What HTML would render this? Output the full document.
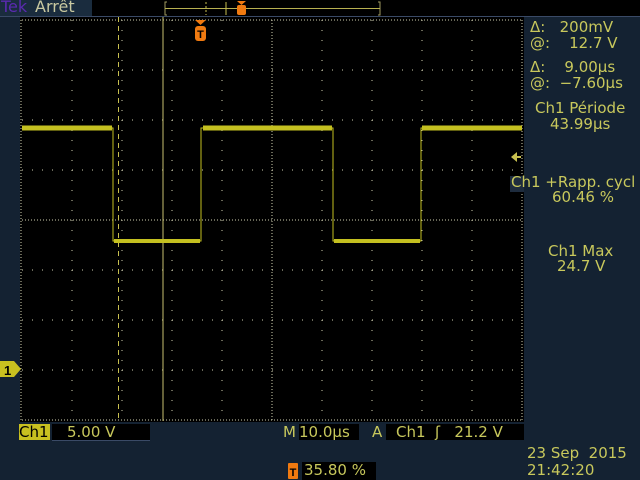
<!DOCTYPE html>
<html><head><meta charset="utf-8"><style>
body{margin:0;width:640px;height:480px;background:#142232;overflow:hidden;position:relative;font-family:"DejaVu Sans","Liberation Sans",sans-serif;color:#c8c85c}
.t{position:absolute;white-space:nowrap;font-size:15px;line-height:15px}
</style></head><body>
<svg width="640" height="480" style="position:absolute;left:0;top:0">
<rect x="0" y="0" width="92" height="16" fill="#1a2c3e"/>
<rect x="92" y="0" width="548" height="16" fill="#000"/>
<line x1="0" y1="16.5" x2="640" y2="16.5" stroke="#3a4a66"/>
<rect x="20" y="17" width="504" height="405" fill="#000"/>
<path d="M167 2h-2v13h2M378 2h2v13h-2" stroke="#a09a60" fill="none"/>
<line x1="165" y1="8.5" x2="380" y2="8.5" stroke="#b8b050"/>
<line x1="206" y1="2" x2="206" y2="15" stroke="#c8c050" stroke-dasharray="2 2"/>
<line x1="226" y1="2" x2="226" y2="15" stroke="#c8c050"/>
<path d="M237 1h9l-4.5 4z" fill="#f07a10"/><rect x="237" y="5" width="9" height="10" rx="2" fill="#f07a10"/>
<g stroke="#d0d0b0" stroke-width="1" stroke-dasharray="1 9">
<line x1="22" y1="70" x2="522" y2="70"/><line x1="22" y1="120" x2="522" y2="120"/><line x1="22" y1="170" x2="522" y2="170"/><line x1="22" y1="270" x2="522" y2="270"/><line x1="22" y1="320" x2="522" y2="320"/><line x1="22" y1="370" x2="522" y2="370"/>
<line x1="72" y1="20" x2="72" y2="420"/><line x1="122" y1="20" x2="122" y2="420"/><line x1="172" y1="20" x2="172" y2="420"/><line x1="222" y1="20" x2="222" y2="420"/><line x1="322" y1="20" x2="322" y2="420"/><line x1="372" y1="20" x2="372" y2="420"/><line x1="422" y1="20" x2="422" y2="420"/><line x1="472" y1="20" x2="472" y2="420"/>
</g>
<g stroke="#d0d0b0" stroke-dasharray="1 2">
<line x1="22" y1="220" x2="522" y2="220"/><line x1="272" y1="20" x2="272" y2="420"/>
<line x1="22" y1="20" x2="522" y2="20"/><line x1="22" y1="420" x2="522" y2="420"/>
<line x1="21" y1="20" x2="21" y2="420"/><line x1="522" y1="20" x2="522" y2="420"/>
</g>
<line x1="118.5" y1="17" x2="118.5" y2="421" stroke="#c8c050" stroke-dasharray="5 4"/>
<line x1="163" y1="17" x2="163" y2="421" stroke="#c8c070"/>
<g stroke="#c4c020" fill="none">
<path d="M22 128H113V241H201V128H333V241H421V128H522" stroke-width="1"/>
<path d="M22 128H112M203 128H332M422 128H522" stroke-width="5"/>
<path d="M114 241H200M334 241H420" stroke-width="4"/>
</g>
<path d="M195 20h11l-5.5 5z" fill="#f07a10"/>
<rect x="195" y="26" width="11" height="15" rx="3" fill="#f07a10"/>
<text x="200.5" y="38" font-size="11" font-weight="bold" text-anchor="middle" fill="#000" font-family="Liberation Sans">T</text>
<path d="M0 361h14l7 8l-7 8H0z" fill="#c8c020"/>
<text x="4" y="375" font-size="13" font-weight="bold" fill="#000" font-family="Liberation Sans">1</text>
<path d="M511 157l6-5v10z" fill="#c8c050"/><line x1="515" y1="157" x2="521" y2="157" stroke="#c8c050" stroke-width="2"/>
<rect x="19" y="424" width="31" height="16" fill="#c8c020"/>
<rect x="52" y="424" width="98" height="16" fill="#000"/><line x1="52" y1="440.5" x2="150" y2="440.5" stroke="#3a4a66"/>
<rect x="299" y="424" width="60" height="16" fill="#000"/>
<rect x="386" y="424" width="138" height="16" fill="#000"/>
<rect x="288" y="463" width="10" height="16" rx="1" fill="#f07a10"/>
<text x="293" y="476" font-size="11" font-weight="bold" text-anchor="middle" fill="#000" font-family="Liberation Sans">T</text>
<rect x="302" y="462" width="74" height="18" fill="#000"/>
<rect x="510" y="176" width="14" height="16" fill="#1e2c3e"/>
</svg>
<div class="t" style="left:1px;top:-1px;color:#5a2ab0;font-size:16px">Tek</div>
<div class="t" style="left:35px;top:-1px;color:#c8c8a0;font-size:16px">Arrêt</div>
<div class="t" style="left:530px;top:20px">Δ:&nbsp;&nbsp;&nbsp;200mV</div>
<div class="t" style="left:530px;top:36px">@:&nbsp;&nbsp;&nbsp;&nbsp;12.7 V</div>
<div class="t" style="left:530px;top:60px">Δ:&nbsp;&nbsp;&nbsp;&nbsp;9.00μs</div>
<div class="t" style="left:530px;top:76px">@:&nbsp;&nbsp;−7.60μs</div>
<div class="t" style="left:535px;top:101px">Ch1 Période</div>
<div class="t" style="left:550px;top:117px">43.99μs</div>
<div class="t" style="left:511px;top:175px">Ch1 +Rapp. cycl</div>
<div class="t" style="left:552px;top:190px">60.46 %</div>
<div class="t" style="left:548px;top:244px">Ch1 Max</div>
<div class="t" style="left:557px;top:259px">24.7 V</div>
<div class="t" style="left:19px;top:425px;color:#000">Ch1</div>
<div class="t" style="left:67px;top:425px">5.00 V</div>
<div class="t" style="left:283px;top:425px">M</div>
<div class="t" style="left:299px;top:425px">10.0μs</div>
<div class="t" style="left:372px;top:425px">A</div>
<div class="t" style="left:396px;top:425px">Ch1&nbsp;&nbsp;ʃ&nbsp;&nbsp;&nbsp;21.2 V</div>
<div class="t" style="left:304px;top:463px">35.80 %</div>
<div class="t" style="left:527px;top:446px">23 Sep&nbsp;&nbsp;2015</div>
<div class="t" style="left:527px;top:463px">21:42:20</div>
</body></html>
